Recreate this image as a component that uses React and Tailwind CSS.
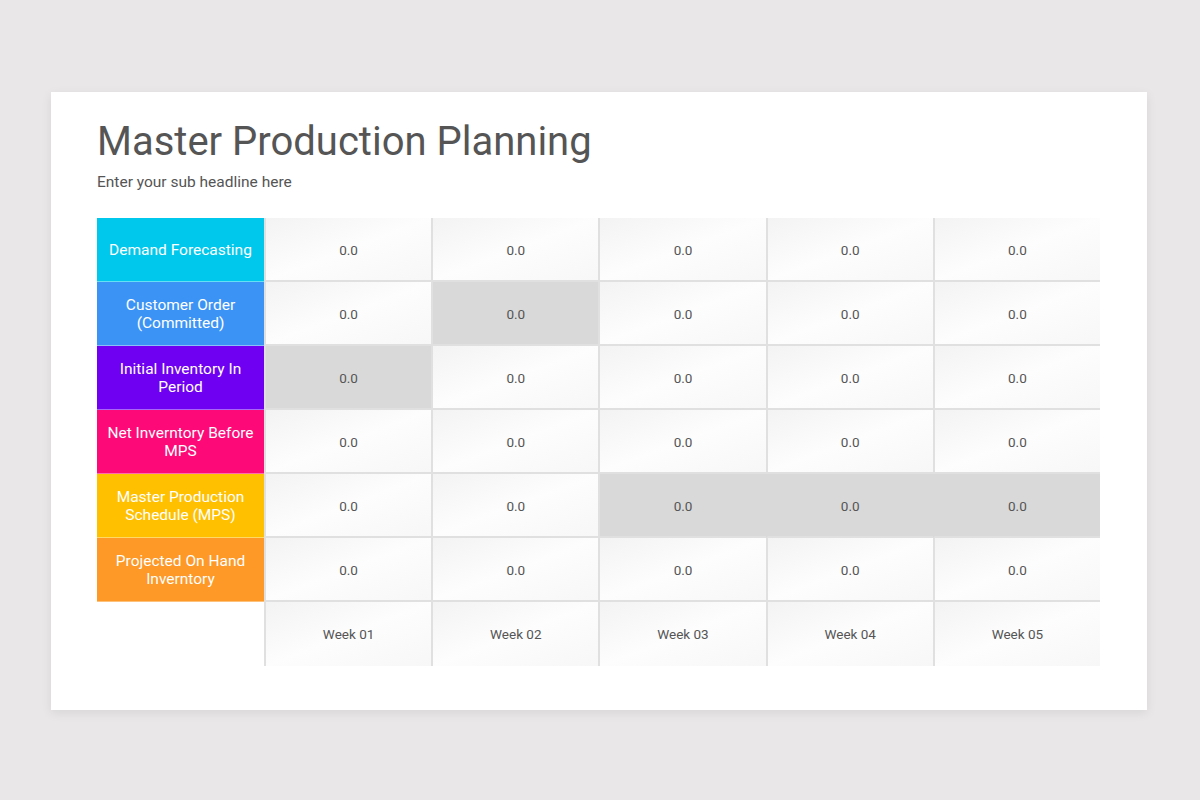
const ROWS = [
  { label: "Demand Forecasting", color: "bg-[#00c8ed]", gray: [] },
  { label: "Customer Order (Committed)", color: "bg-[#3c93f6]", gray: [1] },
  { label: "Initial Inventory In Period", color: "bg-[#7000f1]", gray: [0] },
  { label: "Net Inverntory Before MPS", color: "bg-[#fe0a78]", gray: [] },
  { label: "Master Production Schedule (MPS)", color: "bg-[#ffc000]", gray: [2, 3, 4] },
  { label: "Projected On Hand Inverntory", color: "bg-[#fe9826]", gray: [] },
];

const WEEKS = ["Week 01", "Week 02", "Week 03", "Week 04", "Week 05"];

// soft sheen used on every plain cell
const SHEEN = "bg-linear-to-br from-[#f3f3f3] via-[#fdfdfd] to-[#f7f7f7]";

export default function App() {
  return (
    <div
      className="h-[800px] w-full bg-[#e9e7e8] pl-[51px] pt-[92px]"
      style={{ fontFamily: "Roboto, 'Noto Sans', sans-serif" }}
    >
      <div className="h-[618px] w-[1096px] bg-white px-[46px] pt-[20px] shadow-[0_3px_10px_rgba(0,0,0,0.08)]">
        <h1 className="text-[40px] leading-[60px] font-normal text-[#555555]">Master Production Planning</h1>
        <p className="mt-[1px] text-[15.5px] leading-[18px] text-[#555555]">Enter your sub headline here</p>

        <div className="mt-[27px] grid w-[1003px] grid-cols-[167px_repeat(5,1fr)]">
          {ROWS.map((row) => (
            <Row key={row.label} row={row} />
          ))}
          <div className="h-16" />
          {WEEKS.map((week) => (
            <div
              key={week}
              className={`flex h-16 items-center justify-center border-l-2 border-[#e0e0e0] text-[13.5px] text-[#555555] ${SHEEN}`}
            >
              {week}
            </div>
          ))}
        </div>
      </div>
    </div>
  );
}

function Row({ row }) {
  return (
    <>
      <div
        className={`flex h-16 items-center justify-center border-b border-white/40 px-1 text-center text-[15.5px] leading-[18px] text-white ${row.color}`}
      >
        {row.label}
      </div>
      {[0, 1, 2, 3, 4].map((i) => {
        const gray = row.gray.includes(i);
        const merged = gray && row.gray.includes(i - 1);
        return (
          <div
            key={i}
            className={`flex h-16 items-center justify-center border-b-2 border-l-2 border-b-[#e0e0e0] pt-0.5 text-[13.5px] text-[#555555] ${
              gray ? "bg-[#d9d9d9]" : SHEEN
            } ${merged ? "border-l-[#d9d9d9]" : "border-l-[#e0e0e0]"}`}
          >
            0.0
          </div>
        );
      })}
    </>
  );
}
